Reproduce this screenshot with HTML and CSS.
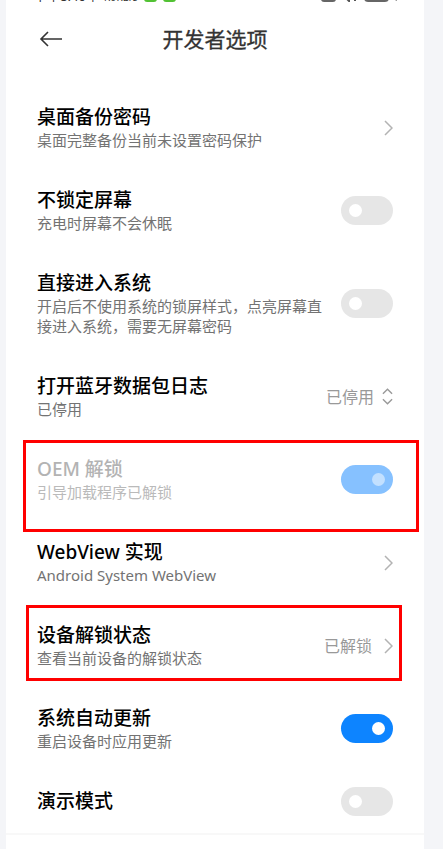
FILE: index.html
```html
<!DOCTYPE html>
<html lang="zh-CN">
<head>
<meta charset="utf-8">
<meta name="viewport" content="width=device-width, initial-scale=1">
<title>开发者选项</title>
<link rel="stylesheet" href="styles.css">
</head>
<body>
<div class="screen">
  <div class="status">
    <div class="status-side">
      <span class="status-text">下午8:46 |</span>
      <span class="status-text status-speed">1.9KB/s</span>
      <i class="app-dot"></i>
      <i class="app-dot"></i>
    </div>
    <div class="status-side">
      <svg class="status-icons" viewBox="0 0 78 14" aria-hidden="true">
        <rect x="1" y="3" width="13" height="10" rx="2" fill="none" stroke="#666" stroke-width="2"/>
        <path d="M28 2v11l-3-3M34 13V2l3 3" fill="none" stroke="#555" stroke-width="2"/>
        <rect x="44" y="2" width="23" height="11" rx="3" fill="none" stroke="#666" stroke-width="2"/>
        <path d="M75 13l2-5h-3l2-6" fill="none" stroke="#777" stroke-width="1"/>
      </svg>
    </div>
  </div>
  <header class="header">
    <button class="back" type="button" aria-label="返回">
      <svg viewBox="0 0 24 16" aria-hidden="true"><path d="M9 1L2 8l7 7M2 8H23"/></svg>
    </button>
    <h1 class="heading">开发者选项</h1>
  </header>
  <main class="list">
    <a class="row" href="#backup">
      <span class="copy"><span class="title">桌面备份密码</span><span class="note">桌面完整备份当前未设置密码保护</span></span>
      <svg class="chevron" viewBox="0 0 9 16" aria-hidden="true"><path d="M1 1l7 7-7 7"/></svg>
    </a>
    <label class="row">
      <span class="copy"><span class="title">不锁定屏幕</span><span class="note">充电时屏幕不会休眠</span></span>
      <input class="switch" type="checkbox">
    </label>
    <label class="row">
      <span class="copy"><span class="title">直接进入系统</span><span class="note">开启后不使用系统的锁屏样式，点亮屏幕直接进入系统，需要无屏幕密码</span></span>
      <input class="switch" type="checkbox">
    </label>
    <div class="row">
      <label class="copy" for="bt-log"><span class="title">打开蓝牙数据包日志</span><span class="note">已停用</span></label>
      <span class="picker">
        <select class="select" id="bt-log"><option>已停用</option><option>已启用</option></select>
        <svg class="updown" viewBox="0 0 12 18" aria-hidden="true"><path d="M1 6l5-5 5 5M1 12l5 5 5-5"/></svg>
      </span>
    </div>
    <label class="row row-disabled mark mark-wide">
      <span class="copy"><span class="title">OEM 解锁</span><span class="note">引导加载程序已解锁</span></span>
      <input class="switch" type="checkbox" checked disabled>
    </label>
    <a class="row" href="#webview">
      <span class="copy"><span class="title">WebView 实现</span><span class="note">Android System WebView</span></span>
      <svg class="chevron" viewBox="0 0 9 16" aria-hidden="true"><path d="M1 1l7 7-7 7"/></svg>
    </a>
    <a class="row mark mark-tight" href="#unlock">
      <span class="copy"><span class="title">设备解锁状态</span><span class="note">查看当前设备的解锁状态</span></span>
      <span class="value">已解锁</span>
      <svg class="chevron" viewBox="0 0 9 16" aria-hidden="true"><path d="M1 1l7 7-7 7"/></svg>
    </a>
    <label class="row">
      <span class="copy"><span class="title">系统自动更新</span><span class="note">重启设备时应用更新</span></span>
      <input class="switch" type="checkbox" checked>
    </label>
    <label class="row">
      <span class="copy"><span class="title">演示模式</span></span>
      <input class="switch" type="checkbox">
    </label>
  </main>
</div>
</body>
</html>
```
FILE: styles.css
```css
* { box-sizing: border-box; }

body {
  margin: 0;
  background: #f4f5f8;
  color: #000;
  font-family: "Noto Sans", "Noto Sans CJK SC", sans-serif;
}

.screen {
  min-height: 100vh;
  margin: 0 19px 0 6px;
  background: #fff;
}

/* Only the lower edge of the status bar is in view. */
.status {
  display: flex;
  justify-content: space-between;
  align-items: flex-end;
  height: 2px;
  padding: 0 25px 0 28px;
  overflow: hidden;
}

.status-side {
  display: flex;
  align-items: flex-end;
  gap: 6px;
}

.status-text {
  color: #333;
  font-size: 13px;
  line-height: 12px;
  white-space: nowrap;
}

.status-speed {
  font-size: 10px;
  line-height: 10px;
}

.app-dot {
  width: 13px;
  height: 13px;
  border-radius: 3px;
  background: #52c234;
}

.status-icons {
  display: block;
  width: 78px;
  height: 14px;
}

.header {
  display: grid;
  grid-template-columns: 24px 1fr 24px;
  align-items: center;
  height: 73px;
  padding: 0 33px;
}

.back {
  padding: 0;
  border: 0;
  background: none;
}

.back svg {
  display: block;
  width: 24px;
  height: 16px;
}

.back path {
  fill: none;
  stroke: #333;
  stroke-width: 1.6;
}

.heading {
  margin: 0;
  color: #333;
  font-size: 21px;
  font-weight: 400;
  line-height: 28px;
  text-align: center;
  -webkit-text-stroke: 0.3px currentColor;
}

.list {
  padding-top: 11px;
  border-bottom: 2px solid #f8f8f8;
}

.row {
  position: relative;
  display: flex;
  align-items: center;
  padding: 19px 31px;
  color: inherit;
  text-decoration: none;
}

.copy {
  flex: 1;
  min-width: 0;
  padding-right: 12px;
}

.title,
.note { display: block; }

.title {
  font-size: 19px;
  font-weight: 500;
  line-height: 25px;
}

.note {
  color: #737373;
  font-size: 15px;
  line-height: 20px;
}

.row-disabled .title { color: #b3b3b3; }
.row-disabled .note { color: #bababa; }

.value,
.select {
  color: #999;
  font-family: inherit;
  font-size: 16px;
  line-height: 24px;
}

.value { margin-right: 12px; }

.picker {
  display: flex;
  align-items: center;
  gap: 7px;
}

.select {
  padding: 0;
  border: 0;
  background: none;
  appearance: none;
}

.chevron {
  width: 9px;
  height: 16px;
}

.updown {
  width: 11px;
  height: 17px;
}

.chevron path,
.updown path {
  fill: none;
  stroke: #b3b3b3;
  stroke-width: 1.5;
}

.updown path { stroke: #999; }

.switch {
  display: flex;
  align-items: center;
  flex: none;
  width: 52px;
  height: 29px;
  margin: -2px 0;
  padding: 0 8px;
  border-radius: 15px;
  background: #e6e6e6;
  appearance: none;
}

.switch::before {
  content: "";
  width: 13px;
  height: 13px;
  border-radius: 50%;
  background: #fff;
}

.switch:checked {
  justify-content: flex-end;
  background: #0d84ff;
}

.switch:disabled { background: #86c1ff; }
.switch:disabled::before { background: #c2e0ff; }

/* Red call-out frames laid over the rows. */
.mark::after {
  content: "";
  position: absolute;
  border: 3px solid #f00;
  pointer-events: none;
}

.mark-wide::after { inset: 2px 5px -11px 17px; }
.mark-tight::after { inset: 1px 22px 6px 20px; }
```
